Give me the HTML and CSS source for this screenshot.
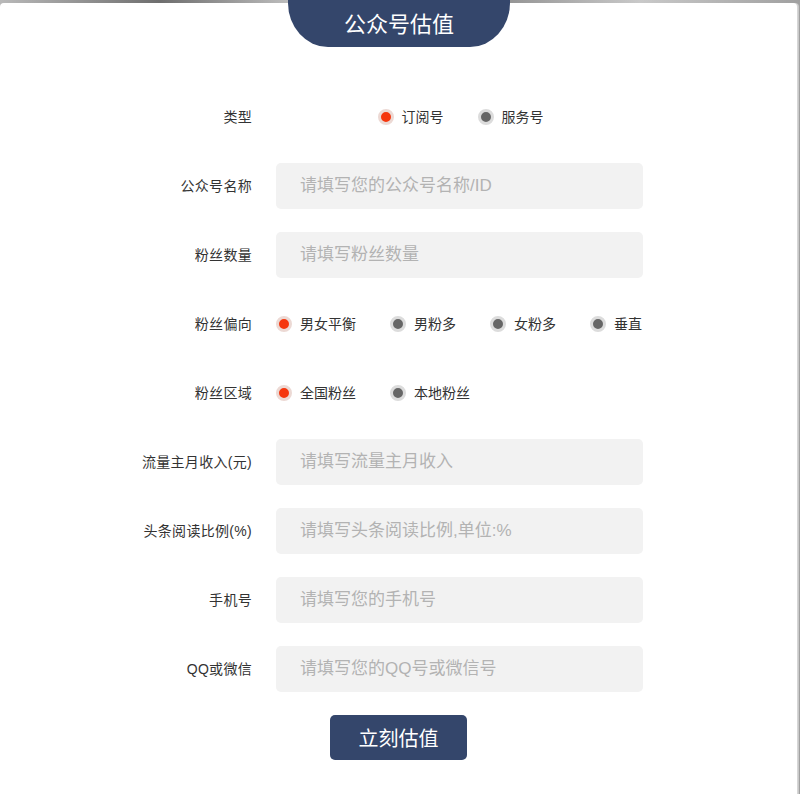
FILE: index.html
```html
<!DOCTYPE html>
<html lang="zh-CN">
<head>
<meta charset="utf-8">
<title>公众号估值</title>
<link rel="stylesheet" href="styles.css">
</head>
<body>
<div class="modal">
  <div class="tab">公众号估值</div>
  <form class="form">
    <div class="label">类型</div>
    <div class="radios center">
      <label class="radio"><span class="dot on"></span>订阅号</label>
      <label class="radio"><span class="dot"></span>服务号</label>
    </div>

    <div class="label">公众号名称</div>
    <input class="input" type="text" placeholder="请填写您的公众号名称/ID">

    <div class="label">粉丝数量</div>
    <input class="input" type="text" placeholder="请填写粉丝数量">

    <div class="label">粉丝偏向</div>
    <div class="radios">
      <label class="radio"><span class="dot on"></span>男女平衡</label>
      <label class="radio"><span class="dot"></span>男粉多</label>
      <label class="radio"><span class="dot"></span>女粉多</label>
      <label class="radio"><span class="dot"></span>垂直</label>
    </div>

    <div class="label">粉丝区域</div>
    <div class="radios">
      <label class="radio"><span class="dot on"></span>全国粉丝</label>
      <label class="radio"><span class="dot"></span>本地粉丝</label>
    </div>

    <div class="label">流量主月收入(元)</div>
    <input class="input" type="text" placeholder="请填写流量主月收入">

    <div class="label">头条阅读比例(%)</div>
    <input class="input" type="text" placeholder="请填写头条阅读比例,单位:%">

    <div class="label">手机号</div>
    <input class="input" type="text" placeholder="请填写您的手机号">

    <div class="label">QQ或微信</div>
    <input class="input" type="text" placeholder="请填写您的QQ号或微信号">
  </form>
  <div class="actions">
    <button class="btn" type="button">立刻估值</button>
  </div>
</div>
</body>
</html>
```
FILE: styles.css
```css
html, body {
  margin: 0;
  padding: 0;
}
body {
  width: 800px;
  height: 794px;
  overflow: hidden;
  background: linear-gradient(90deg, #b9b9b9 0%, #6e6e6e 20%, #d0d0d0 40%, #8a8a8a 60%, #c9c9c9 80%, #a0a0a0 100%);
  font-family: "Liberation Sans", "Noto Sans CJK SC", sans-serif;
  color: #333;
}
.modal {
  width: 797px;
  height: 791px;
  margin-top: 3px;
  background: #fff;
  border-radius: 4px 4px 0 0;
  box-shadow: 1px 0 0 #d6d6d6, 2px 0 0 #c9c9c9;
  display: flex;
  flex-direction: column;
  align-items: center;
}
.tab {
  width: 222px;
  height: 47px;
  margin-top: -3px;
  margin-left: 1px;
  background: #34466b;
  color: #fff;
  font-size: 22px;
  line-height: 49px;
  text-align: center;
  border-radius: 0 0 40px 40px / 0 0 44px 44px;
}
.form {
  align-self: flex-start;
  margin-top: 47px;
  display: grid;
  grid-template-columns: 252px 367px;
  grid-auto-rows: 46px;
  column-gap: 24px;
  row-gap: 23px;
  align-items: center;
}
.label {
  text-align: right;
  font-size: 14px;
  line-height: 20px;
  color: #333;
  letter-spacing: 0.3px;
}
.input {
  box-sizing: border-box;
  width: 367px;
  height: 46px;
  border: none;
  outline: none;
  border-radius: 5px;
  background: #f2f2f2;
  padding: 0 0 0 24px;
  margin: 0;
  font-family: inherit;
  font-size: 17px;
  color: #333;
}
.input::placeholder {
  color: #b3b3b3;
}
.radios {
  display: flex;
  align-items: center;
  gap: 34px;
}
.radios.center {
  justify-content: center;
  padding-left: 2px;
}
.radio {
  display: flex;
  align-items: center;
  gap: 8px;
  font-size: 14px;
  line-height: 20px;
  color: #333;
}
.dot {
  box-sizing: border-box;
  width: 16px;
  height: 16px;
  border-radius: 50%;
  background: #666;
  border: 3px solid #dcdcdc;
}
.dot.on {
  background: #f5360d;
  border-color: #ecd9d4;
}
.actions {
  margin-top: 23px;
  display: flex;
  justify-content: center;
}
.btn {
  width: 137px;
  height: 45px;
  border: none;
  border-radius: 5px;
  background: #34466b;
  color: #fff;
  font-family: inherit;
  font-size: 20px;
  padding: 0;
  cursor: pointer;
}
```
